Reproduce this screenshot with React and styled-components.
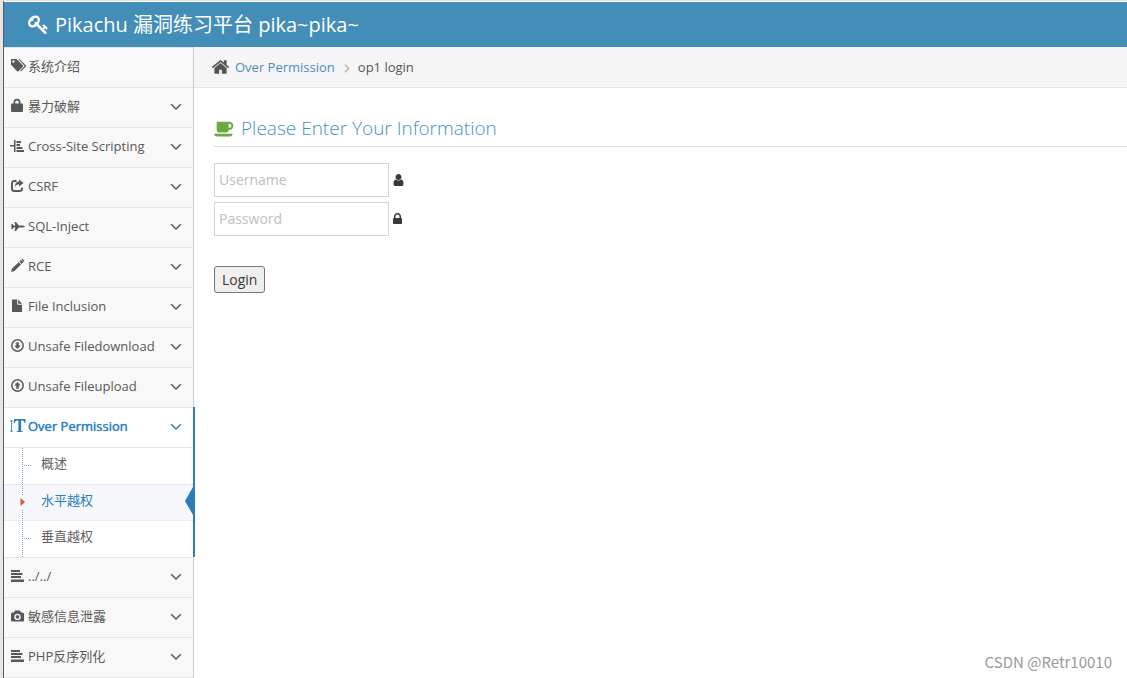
import React from "react"
import styled, { createGlobalStyle, css } from "styled-components"

const GlobalStyle = createGlobalStyle`
  * {
    box-sizing: border-box;
  }

  body {
    margin: 0;
    background: #fff;
    color: #393939;
    font-family: "Open Sans", "Noto Sans CJK SC", sans-serif;
    font-size: 13px;
    line-height: 20px;
  }

  a {
    text-decoration: none;
  }
`

const Page = styled.div`
  position: relative;
  display: flex;
  flex-direction: column;
  min-height: 100vh;
  border-top: 1px solid #e4e4e4;
  border-left: 3px solid #e6e6e6;
`

const Frame = styled.div`
  display: flex;
  flex: 1;
  flex-direction: column;
  padding-top: 1px;
  border-left: 1px solid #5a5a5a;
`

const Navbar = styled.header`
  display: flex;
  align-items: center;
  height: 45px;
  padding-left: 24px;
  background: #438eb9;
`

const Brand = styled.a`
  display: flex;
  align-items: center;
  gap: 6px;
  color: #fff;
  font-size: 20px;
  line-height: 28px;
`

const Body = styled.div`
  display: flex;
  flex: 1;
`

const Sidebar = styled.nav`
  flex: none;
  width: 190px;
  border-right: 1px solid #ccc;
  background: #f8f8f8;
`

const List = styled.ul`
  margin: 0;
  padding: 0;
  border-bottom: 1px solid #e5e5e5;
  list-style: none;
`

const Item = styled.li`
  position: relative;
  border-top: 1px solid #e5e5e5;

  ${props => props.$open && css`
    background: #fff;

    &::after {
      content: "";
      position: absolute;
      top: -1px;
      right: -2px;
      bottom: 0;
      width: 2px;
      background: #2b7dbc;
    }
  `}
`

const itemStyles = css`
  display: flex;
  align-items: center;
  width: 100%;
  height: 39px;
  padding: 0 11px 3px 6px;
  border: 0;
  background: none;
  color: ${props => (props.$open ? "#2b7dbc" : "#585858")};
  font: inherit;
  text-align: left;
  text-shadow: ${props => (props.$open ? "0 0 1px currentColor" : "none")};
  cursor: pointer;
`

const ItemLink = styled.a`
  ${itemStyles}
`

const ItemButton = styled.button`
  ${itemStyles}
`

const IconBox = styled.span`
  display: flex;
  flex: none;
  width: 18px;
`

const Label = styled.span`
  flex: 1;
  white-space: nowrap;
`

const Caret = styled.span`
  display: flex;
  padding-top: 2px;
`

const Submenu = styled.ul`
  position: relative;
  margin: 0;
  padding: 0 0 1px;
  border-top: 1px solid #e5e5e5;
  list-style: none;

  &::before {
    content: "";
    position: absolute;
    z-index: 1;
    top: 0;
    bottom: 0;
    left: 18px;
    border-left: 1px dotted #7fa9cc;
  }
`

const SubItem = styled.li`
  position: relative;
  min-height: 36px;
  background: ${props => (props.$active ? "#f5f7fa" : "#fff")};

  & + & {
    border-top: 1px dotted #dcdcdc;
  }

  &::before {
    content: "";
    position: absolute;
    top: 17px;
    left: 20px;
    width: 7px;
    border-top: 1px dotted #7fa9cc;
    display: ${props => (props.$active ? "none" : "block")};
  }
`

const SubLink = styled.a`
  display: block;
  padding: 5px 0 10px 37px;
  color: ${props => (props.$active ? "#2b7dbc" : "#616161")};
`

const Bullet = styled.span`
  position: absolute;
  z-index: 2;
  top: 10px;
  left: 16px;
  display: flex;
  padding: 3px 0;
  background: #f5f7fa;
  color: #c86139;
`

const Pointer = styled.span`
  position: absolute;
  top: 2px;
  right: 0;
  border: solid transparent;
  border-width: 14px 8px 14px 0;
  border-right-color: #2b7dbc;
`

const Main = styled.main`
  flex: 1;
  min-width: 0;
`

const Breadcrumbs = styled.nav`
  display: flex;
  align-items: center;
  height: 41px;
  padding-left: 17px;
  border-bottom: 1px solid #e5e5e5;
  background: #f5f5f5;
  color: #555;
`

const CrumbLink = styled.a`
  margin-left: 5px;
  color: #4c8fbd;
`

const Separator = styled.span`
  display: flex;
  margin: 2px 8px 0 9px;
  color: #b2b6bf;
`

const Content = styled.div`
  padding: 28px 0 24px 20px;
`

const Heading = styled.h4`
  display: flex;
  align-items: center;
  gap: 7px;
  margin: 0 0 16px;
  padding-bottom: 6px;
  border-bottom: 1px solid #d5e3ef;
  color: #478fca;
  font-size: 19px;
  font-weight: 300;
  line-height: 24px;
`

const Green = styled.span`
  display: flex;
  color: #69aa46;
`

const Field = styled.label`
  display: flex;
  align-items: center;
  gap: 4px;
  margin-bottom: 5px;
`

const TextInput = styled.input`
  width: 175px;
  height: 34px;
  padding: 3px 4px 5px;
  border: 1px solid #d5d5d5;
  border-radius: 0;
  color: #858585;
  font: inherit;
  font-size: 14px;

  &::placeholder {
    color: #c0c0c0;
    opacity: 1;
  }
`

const LoginButton = styled.button`
  height: 27px;
  margin-top: 25px;
  padding: 0 7px;
  border: 1px solid #767676;
  border-radius: 3px;
  background: #efefef;
  color: #393939;
  font: inherit;
  font-size: 14px;
`

const Watermark = styled.span`
  position: absolute;
  right: 15px;
  bottom: 6px;
  color: #999;
  font-family: "Noto Sans CJK SC", sans-serif;
  font-size: 15px;
`

const wide = "0 0 1792 1792"
const small = "0 0 16 16"

const icons = {
  key: [wide, <path d="M832 512q0-80-56-136t-136-56-136 56-56 136q0 42 19 83-41-19-83-19-80 0-136 56t-56 136 56 136 136 56 136-56 56-136q0-42-19-83 41 19 83 19 80 0 136-56t56-136zm851 704q0 17-49 66t-66 49q-9 0-28.5-16t-36.5-33-38.5-40-24.5-26l-96 96 220 220q28 28 28 68 0 42-39 81t-81 39q-40 0-68-28l-671-671q-176 131-365 131-163 0-265.5-102.5t-102.5-265.5q0-160 95-313t248-248 313-95q163 0 265.5 102.5t102.5 265.5q0 189-131 365l355 355 96-96q-3-3-26-24.5t-40-38.5-33-36.5-16-28.5q0-17 49-66t66-49q13 0 23 10 6 6 46 44.5t82 79.5 86.5 86 73 78 28.5 41z" />],
  home: [wide, <path d="M1472 992v480q0 26-19 45t-45 19h-384v-384h-256v384h-384q-26 0-45-19t-19-45v-480q0-1 .5-3t.5-3l575-474 575 474q1 2 1 6zm223-69l-62 74q-8 9-21 11h-3q-13 0-21-7l-692-577-692 577q-12 8-24 7-13-2-21-11l-62-74q-8-10-7-23.5t11-21.5l719-599q32-26 76-26t76 26l244 204v-195q0-14 9-23t23-9h192q14 0 23 9t9 23v408l219 182q10 8 11 21.5t-7 23.5z" />],
  coffee: ["0 0 1920 1792", <path d="M1664 640q0-80-56-136t-136-56h-64v384h64q80 0 136-56t56-136zm-1664 768h1792q0 106-75 181t-181 75h-1280q-106 0-181-75t-75-181zm1856-768q0 159-112.5 271.5t-271.5 112.5h-64v32q0 92-66 158t-158 66h-704q-92 0-158-66t-66-158v-736q0-26 19-45t45-19h1152q159 0 271.5 112.5t112.5 271.5z" />],
  user: ["256 0 1280 1792", <path d="M1536 1399q0 109-62.5 187t-150.5 78h-854q-88 0-150.5-78t-62.5-187q0-85 8.5-160.5t31.5-152 58.5-131 94-89 134.5-34.5q131 128 313 128t313-128q76 0 134.5 34.5t94 89 58.5 131 31.5 152 8.5 160.5zm-256-887q0 159-112.5 271.5t-271.5 112.5-271.5-112.5-112.5-271.5 112.5-271.5 271.5-112.5 271.5 112.5 112.5 271.5z" />],
  padlock: ["320 0 1152 1792", <path d="M640 768h512v-192q0-106-75-181t-181-75-181 75-75 181v192zm832 96v576q0 40-28 68t-68 28h-960q-40 0-68-28t-28-68v-576q0-40 28-68t68-28h32v-192q0-184 132-316t316-132 316 132 132 316v192h32q40 0 68 28t28 68z" />],
  down: ["0 0 12 8", <path d="M1.2 1.2 6 6l4.800-4.800" fill="none" stroke="currentColor" strokeWidth="1.500" />],
  right: ["0 0 6 9", <path d="M1 .8 4.700 4.500 1 8.200" fill="none" stroke="currentColor" strokeWidth="1.500" />],
  bullet: ["0 0 5 8", <path d="M.5 0 5 4 .5 8z" />],
  tags: [small, (
    <>
      <path d="M1 1h5.500l6.300 6.300a1 1 0 0 1 0 1.400l-4.300 4.500a1 1 0 0 1-1.400 0L1 6.700zM3.400 2.300a1.200 1.200 0 1 0 0 2.400 1.200 1.200 0 0 0 0-2.400z" fillRule="evenodd" />
      <path d="M8.300 1h1.200l6.200 6.300a1 1 0 0 1 0 1.400l-4.700 4.900-.8-.8 4.500-4.800z" />
    </>
  )],
  lock: [small, <path d="M3.500 5.500V4.300a3.500 3.500 0 0 1 7 0v1.200H12a1 1 0 0 1 1 1V13a1 1 0 0 1-1 1H2a1 1 0 0 1-1-1V6.500a1 1 0 0 1 1-1zm1.700 0h3.600V4.300a1.800 1.800 0 0 0-3.600 0z" fillRule="evenodd" />],
  split: [small, <path d="M0 7h4V2h1.500v12H4V8.500H0zM6.500 3H11v2H6.500zM6.500 6H10v2H6.500zM6.500 9h6v2h-6zM6.500 12H14v2H6.500z" />],
  share: [small, (
    <>
      <path d="M6.500 3H4.200A2.200 2.200 0 0 0 2 5.200v5.600A2.200 2.200 0 0 0 4.200 13h5.600a2.200 2.200 0 0 0 2.200-2.200V9.500" fill="none" stroke="currentColor" strokeWidth="1.900" />
      <path d="M9 1.500 13.600 5 9 8.600V6.300c-2 0-3 .8-3.800 2.700C4.800 5.800 6.200 3.800 9 3.600z" />
    </>
  )],
  plane: [small, <path d="M15 8.500c0 .6-2 1.100-3.800 1.100H8.800L6 13H4.500l.9-3.400H3.600L2.500 11H1.200l.5-2L.8 8.500l.9-.5-.5-2h1.300l1.100 1.400h1.800L4.500 4H6l2.800 3.400h2.400c1.800 0 3.800.5 3.800 1.100z" />],
  pencil: [small, <path d="m1 14 1-3.500 6.700-6.300L11 6.500 4.500 13zm8.300-10.400 1.700-1.600 2.300 2.300-1.700 1.600zm2.200-2 .3-.3a1 1 0 0 1 1.300 0l.9.900a1 1 0 0 1 0 1.400l-.3.300z" />],
  file: [small, <path d="M2 1.500h5.200V6a.8.8 0 0 0 .8.800h4V14H2zM8.200 1.500 12 5.500v.3H8.200z" />],
  download: [small, (
    <>
      <circle cx="7.500" cy="7.500" r="5.700" fill="none" stroke="currentColor" strokeWidth="1.500" />
      <path d="M6.300 4.200h2.400v3.300h2L7.500 11 4.300 7.500h2z" />
    </>
  )],
  upload: [small, (
    <>
      <circle cx="7.500" cy="7.500" r="5.700" fill="none" stroke="currentColor" strokeWidth="1.500" />
      <path d="M6.300 10.800h2.400V7.500h2L7.500 4 4.300 7.500h2z" />
    </>
  )],
  textHeight: [small, (
    <>
      <path d="M1.500 2v12M0 3.700 1.500 2 3 3.700M0 12.300 1.500 14 3 12.300" fill="none" stroke="currentColor" strokeWidth=".8" />
      <path d="M4 1h11.500v4h-.8c-.2-1.600-.9-2.500-2.400-2.500h-1.200v9.700c0 .8.500 1 1.700 1.100v.7H6.700v-.7c1.200-.1 1.700-.3 1.700-1.100V2.500H7.200C5.700 2.500 5 3.400 4.800 5H4z" />
    </>
  )],
  align: [small, <path d="M1 2h9v2H1zM1 5h11.500v2H1zM1 8h10v2H1zM1 11.500h13V14H1z" />],
  camera: [small, <path d="M5 2.500h5l1 2h1.500A1.500 1.500 0 0 1 14 6v6.500a1 1 0 0 1-1 1H2a1 1 0 0 1-1-1V6a1.500 1.500 0 0 1 1.500-1.500H4zm2.500 3.200a3.200 3.200 0 1 0 0 6.400 3.200 3.200 0 0 0 0-6.400zm0 1.400a1.800 1.800 0 1 1 0 3.600 1.800 1.800 0 0 1 0-3.600z" fillRule="evenodd" />]
}

function Icon ({ name, width = 16, height = 16 }) {
  const [viewBox, shape] = icons[name]
  return (
    <svg width={width} height={height} viewBox={viewBox} fill="currentColor" aria-hidden="true">
      {shape}
    </svg>
  )
}

const menu = [
  { icon: "tags", label: "系统介绍", link: true },
  { icon: "lock", label: "暴力破解" },
  { icon: "split", label: "Cross-Site Scripting" },
  { icon: "share", label: "CSRF" },
  { icon: "plane", label: "SQL-Inject" },
  { icon: "pencil", label: "RCE" },
  { icon: "file", label: "File Inclusion" },
  { icon: "download", label: "Unsafe Filedownload" },
  { icon: "upload", label: "Unsafe Fileupload" },
  { icon: "textHeight", label: "Over Permission", children: ["概述", "水平越权", "垂直越权"] },
  { icon: "align", label: "../../" },
  { icon: "camera", label: "敏感信息泄露" },
  { icon: "align", label: "PHP反序列化" }
]

const current = "水平越权"

function MenuItem ({ item }) {
  const open = Boolean(item.children)

  if (item.link) {
    return (
      <Item>
        <ItemLink href="#">
          <IconBox><Icon name={item.icon} /></IconBox>
          <Label>{item.label}</Label>
        </ItemLink>
      </Item>
    )
  }

  return (
    <Item $open={open}>
      <ItemButton type="button" $open={open} aria-expanded={open}>
        <IconBox><Icon name={item.icon} /></IconBox>
        <Label>{item.label}</Label>
        <Caret><Icon name="down" width={12} height={8} /></Caret>
      </ItemButton>
      {open && (
        <Submenu>
          {item.children.map(label => (
            <SubItem key={label} $active={label === current}>
              <SubLink href="#" $active={label === current}>{label}</SubLink>
              {label === current && <Bullet><Icon name="bullet" width={5} height={8} /></Bullet>}
              {label === current && <Pointer />}
            </SubItem>
          ))}
        </Submenu>
      )}
    </Item>
  )
}

export default function App () {
  return (
    <Page>
      <GlobalStyle />
      <Frame>
        <Navbar>
          <Brand href="#">
            <Icon name="key" width={21} height={21} />
            Pikachu 漏洞练习平台 pika~pika~
          </Brand>
        </Navbar>
        <Body>
          <Sidebar>
            <List>
              {menu.map(item => <MenuItem key={item.label} item={item} />)}
            </List>
          </Sidebar>
          <Main>
            <Breadcrumbs>
              <Icon name="home" width={19} height={20} />
              <CrumbLink href="#">Over Permission</CrumbLink>
              <Separator><Icon name="right" width={6} height={9} /></Separator>
              <span>op1 login</span>
            </Breadcrumbs>
            <Content>
              <Heading>
                <Green><Icon name="coffee" width={20} height={19} /></Green>
                Please Enter Your Information
              </Heading>
              <form onSubmit={e => e.preventDefault()}>
                <Field>
                  <TextInput type="text" name="username" placeholder="Username" aria-label="Username" />
                  <Icon name="user" width={11} height={14} />
                </Field>
                <Field>
                  <TextInput type="password" name="password" placeholder="Password" aria-label="Password" />
                  <Icon name="padlock" width={9} height={14} />
                </Field>
                <LoginButton type="submit">Login</LoginButton>
              </form>
            </Content>
          </Main>
        </Body>
      </Frame>
      <Watermark>CSDN @Retr10010</Watermark>
    </Page>
  )
}
